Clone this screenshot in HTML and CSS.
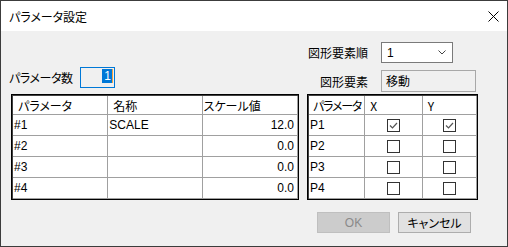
FILE: index.html
```html
<!DOCTYPE html>
<html lang="ja">
<head>
  <meta charset="UTF-8" />
  <title>パラメータ設定</title>
  <link rel="stylesheet" href="styles.css">
</head>
<body>
  <div class="window">
    <div class="titlebar">
      <span class="title">パラメータ設定</span>
      <span class="close">
        <svg width="11" height="11" viewBox="0 0 11 11"><path d="M0.5 0.5 L10.5 10.5 M10.5 0.5 L0.5 10.5" stroke="#000" stroke-width="1" fill="none"/></svg>
      </span>
    </div>

    <div class="content">
      <div class="panes">
        <div class="pane pane-left">
          <div class="field count-field">
            <label class="count-label">パラメータ数</label>
            <div class="count-box"><span class="sel">1</span></div>
          </div>
          <table class="grid grid-left">
            <colgroup><col style="width:95px"><col style="width:94px"><col style="width:95px"></colgroup>
            <tr class="head"><th>パラメータ</th><th>名称</th><th class="th-tight">スケール値</th></tr>
            <tr><td>#1</td><td>SCALE</td><td class="num">12.0</td></tr>
            <tr><td>#2</td><td></td><td class="num">0.0</td></tr>
            <tr><td>#3</td><td></td><td class="num">0.0</td></tr>
            <tr><td>#4</td><td></td><td class="num">0.0</td></tr>
          </table>
        </div>

        <div class="pane pane-right">
          <div class="field">
            <label class="side-label">図形要素順</label>
            <div class="select">
              <span>1</span>
              <svg width="8" height="5" viewBox="0 0 8 5"><path d="M0.5 0.5 L4 4 L7.5 0.5" stroke="#444" stroke-width="1" fill="none"/></svg>
            </div>
          </div>
          <div class="field shape-field">
            <label class="side-label">図形要素</label>
            <div class="readonly">移動</div>
          </div>
          <table class="grid grid-right">
            <colgroup><col style="width:56px"><col style="width:57px"><col style="width:54px"></colgroup>
            <tr class="head"><th class="th-narrow">パラメータ</th><th>X</th><th>Y</th></tr>
            <tr><td>P1</td><td class="chk"><span class="box checked"></span></td><td class="chk"><span class="box checked"></span></td></tr>
            <tr><td>P2</td><td class="chk"><span class="box"></span></td><td class="chk"><span class="box"></span></td></tr>
            <tr><td>P3</td><td class="chk"><span class="box"></span></td><td class="chk"><span class="box"></span></td></tr>
            <tr><td>P4</td><td class="chk"><span class="box"></span></td><td class="chk"><span class="box"></span></td></tr>
          </table>
        </div>
      </div>

      <div class="buttons">
        <button class="btn" disabled>OK</button>
        <button class="btn">キャンセル</button>
      </div>
    </div>
  </div>
</body>
</html>
```

FILE: styles.css
```css
body { margin: 0; font-family: "Noto Sans CJK JP", sans-serif; font-size: 12px; color: #000; font-feature-settings: "palt"; }
.window { width: 508px; height: 247px; box-sizing: border-box; border: 1px solid #3c3c3c; background: #f0f0f0; overflow: hidden; }

.titlebar { height: 30px; background: #fff; display: flex; align-items: center; justify-content: space-between; }
.title { padding-left: 8px; font-size: 12px; }
.close { width: 28px; height: 30px; display: flex; align-items: center; justify-content: center; }

.content { padding: 11px 0 0 10px; }
.panes { display: flex; gap: 8px; align-items: flex-end; }
.pane-left { width: 288px; }
.pane-right { width: 171px; }

.field { display: flex; align-items: center; height: 21px; }
.count-field { margin-bottom: 6px; }
.count-label { width: 71px; margin-left: -2px; letter-spacing: -0.4px; }
.count-box { width: 35px; height: 21px; box-sizing: border-box; border: 1px solid #0078d7; text-align: right; padding-right: 1px; line-height: 14px; }
.sel { display: inline-block; background: #0078d7; color: #fff; font-family: "Liberation Sans", sans-serif; padding: 0 1px 0 2px; height: 14px; border-right: 1px solid #f0a040; }

.side-label { width: 74px; box-sizing: border-box; text-align: right; padding-right: 13px; }
.select { width: 72px; height: 21px; box-sizing: border-box; border: 1px solid #7a7a7a; background: #fff; display: flex; align-items: center; justify-content: space-between; padding: 0 6px 0 5px; font-family: "Liberation Sans", sans-serif; }
.shape-field { height: 22px; margin-top: 7px; margin-bottom: 2px; }
.readonly { width: 95px; height: 22px; box-sizing: border-box; border: 1px solid #a8a8a8; padding-left: 4px; line-height: 20px; }

.grid { border-collapse: separate; border-spacing: 0; table-layout: fixed; border: 1px solid #000; box-shadow: inset 1px 1px 0 #404040; background: #fff; padding: 1px 0 0 1px; }
.grid-left { width: 288px; }
.grid-right { width: 171px; }
.grid th, .grid td { border-right: 1px solid #a0a0a0; border-bottom: 1px solid #a0a0a0; padding: 0; vertical-align: middle; overflow: hidden; white-space: nowrap; }
.grid tr { height: 21px; }
.grid tr.head { height: 19px; }
.grid th { font-weight: normal; text-align: left; padding-left: 5px; }
.grid th.th-tight { padding-left: 1px; }
.grid th.th-narrow { padding-left: 4px; letter-spacing: -1.2px; }
.grid td { font-family: "Liberation Sans", "Noto Sans CJK JP", sans-serif; padding-left: 1px; }
.grid td.num { text-align: right; padding-right: 3px; }
.grid td.chk { text-align: center; padding-left: 0; }

.box { display: inline-block; width: 13px; height: 13px; box-sizing: border-box; border: 1px solid #333; background: #fff; vertical-align: middle; }
.box.checked { background: #fff url("data:image/svg+xml,%3Csvg xmlns='http://www.w3.org/2000/svg' width='11' height='11'%3E%3Cpath d='M2 5.5 L4.5 8 L9 3' stroke='%23555' stroke-width='1.2' fill='none'/%3E%3C/svg%3E") no-repeat center; }

.buttons { display: flex; justify-content: flex-end; gap: 8px; padding-right: 36px; margin-top: 12px; }
.btn { width: 73px; height: 21px; box-sizing: border-box; border: 1px solid #adadad; background: #e1e1e1; font-family: "Noto Sans CJK JP", sans-serif; font-size: 12px; font-feature-settings: "palt"; color: #000; padding: 0; }
.btn:disabled { background: #cccccc; border-color: #bfbfbf; color: #8a8a8a; font-family: "Liberation Sans", sans-serif; }
```
